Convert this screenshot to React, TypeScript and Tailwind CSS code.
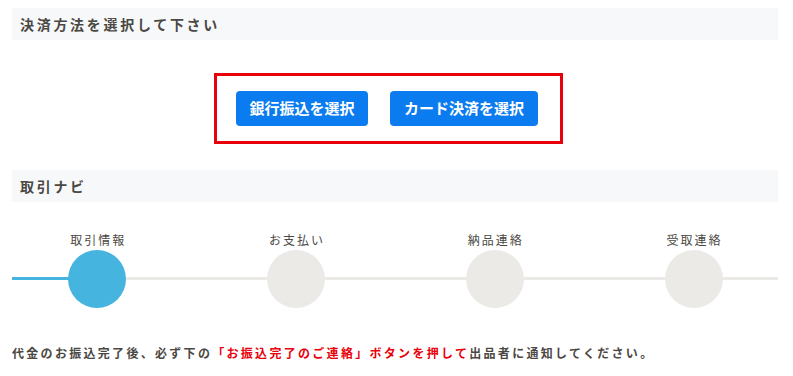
const font = { fontFamily: '"Noto Sans CJK JP", "Noto Sans", sans-serif' }

const steps = ['取引情報', 'お支払い', '納品連絡', '受取連絡']

const SectionTitle = ({ children }: { children: string }) => (
  <div className="ml-3 mr-[15px] h-8 bg-[#f7f8fa] pl-2 flex items-center">
    <h2 className="text-[14px] font-bold tracking-[2.7px] text-[#4b4843]">{children}</h2>
  </div>
)

const App = () => {
  return (
    <div className="w-[793px] h-[376px] bg-white overflow-hidden pt-2" style={font}>
      <SectionTitle>決済方法を選択して下さい</SectionTitle>

      <div className="flex justify-center pt-[33px]">
        <div className="ml-[-16px] w-[349px] h-[71px] border-[3px] border-[#e8000b] flex items-center gap-[22px] pl-[19px]">
          <button
            type="button"
            className="w-[132px] h-[35px] rounded bg-[#0b7cf0] text-white text-[15px] font-semibold"
          >
            銀行振込を選択
          </button>
          <button
            type="button"
            className="w-[148px] h-[35px] rounded bg-[#0b7cf0] text-white text-[15px] font-semibold"
          >
            カード決済を選択
          </button>
        </div>
      </div>

      <div className="mt-[26px]">
        <SectionTitle>取引ナビ</SectionTitle>
      </div>

      <div className="relative mt-[29px] h-[77px]">
        <div className="absolute left-3 right-[15px] top-[46px] h-[3px] bg-[#ebeae6]"></div>
        <div className="absolute left-3 w-[86px] top-[46px] h-[3px] bg-[#45b4de]"></div>
        <div className="relative ml-[-2px] w-[795px] grid grid-cols-4">
          {steps.map((s, i) => (
            <div key={s} className="flex flex-col items-center">
              <span className="text-[12px] leading-[18px] tracking-[2px] text-[#4b4843] pl-[2px]">{s}</span>
              <div
                className={`mt-[1px] w-[58px] h-[58px] rounded-full ${
                  i === 0 ? 'bg-[#45b4de]' : 'bg-[#ebeae6]'
                }`}
              ></div>
            </div>
          ))}
        </div>
      </div>

      <p className="mt-[36px] ml-3 text-[12px] font-bold tracking-[2.3px] text-[#4b4843] whitespace-nowrap">
        代金のお振込完了後、必ず下の
        <span className="text-[#e8000b]">「お振込完了のご連絡」ボタンを押して</span>
        出品者に通知してください。
      </p>
    </div>
  )
}

export default App
